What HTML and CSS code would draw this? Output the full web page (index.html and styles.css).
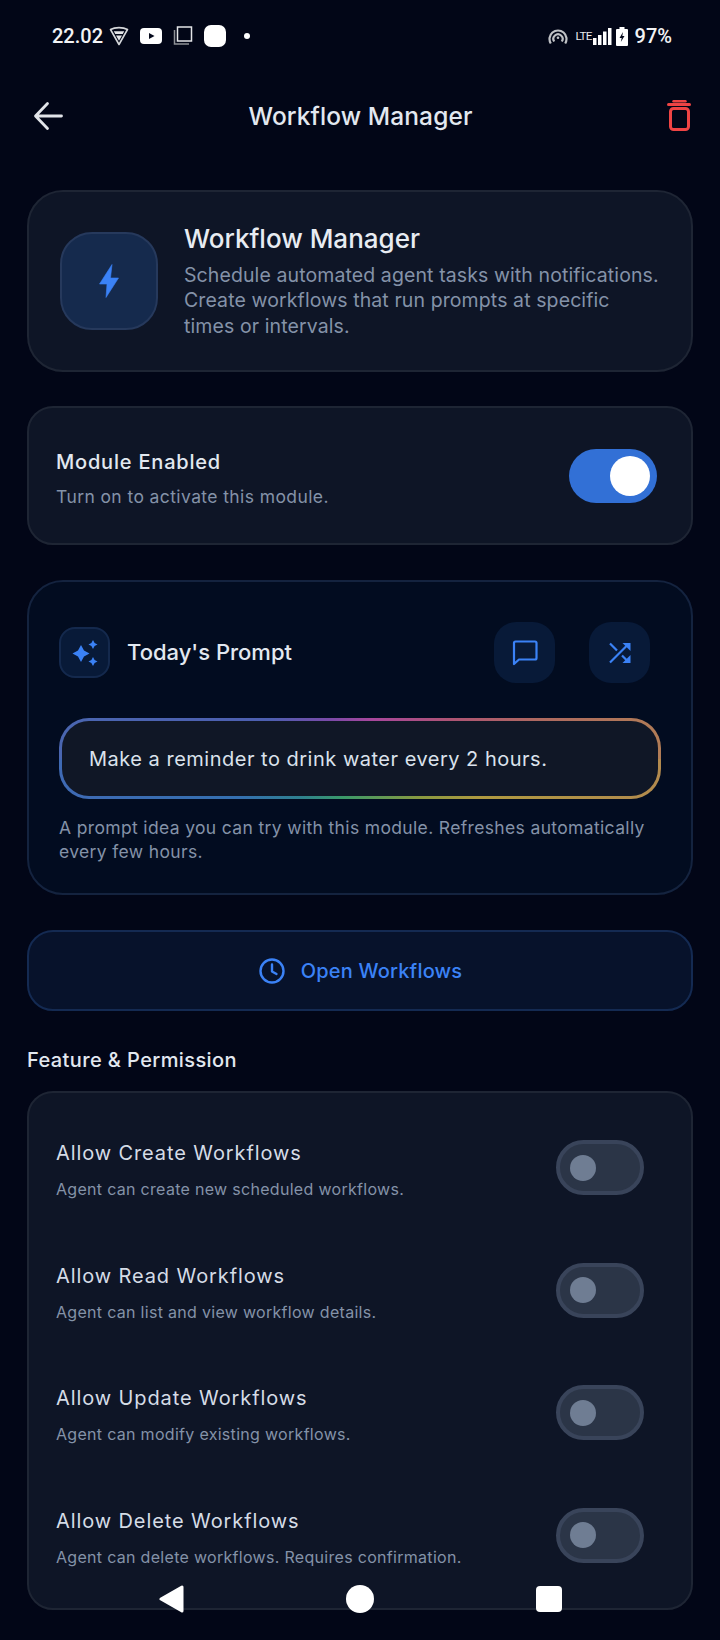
FILE: index.html
```html
<!DOCTYPE html>
<html>
<head lang="en">
    <meta charset="UTF-8">
    <title>Workflow Manager</title>
    <link rel="stylesheet" href="styles.css">
</head>
<body>
<div class="status">
    <div class="status-left">
        <span class="clock">22.02</span>
        <svg class="s-vpn" width="20" height="20" viewBox="0 0 20 20"><path d="M1.500 3.500 C6 1 14 1 18.500 3.500 L10 18.500 Z" fill="none" stroke="#d5d7db" stroke-width="1.600" stroke-linejoin="round"/><path d="M4.800 5.300 H15.200 L13.800 8 H6.300 Z M7 9.500 H13 L10 14.800 Z" fill="#e4e5e8"/></svg>
        <svg class="s-yt" width="22" height="16" viewBox="0 0 22 16"><rect width="22" height="16" rx="4" fill="#fff"/><path d="M9 5 L14.500 8 L9 11 Z" fill="#050a1c"/></svg>
        <svg class="s-copy" width="20" height="20" viewBox="0 0 20 20" fill="none"><rect x="4.500" y="1" width="14" height="14" stroke="#e4e5e8" stroke-width="1.500"/><path d="M1.500 4 V18 H16" stroke="#8e9196" stroke-width="1.500"/></svg>
        <span class="s-square"></span>
        <span class="s-dot"></span>
    </div>
    <div class="status-right">
        <svg width="20" height="18" viewBox="0 0 20 18" fill="none" stroke="#bfc1c5" stroke-width="2.200"><path d="M2.800 16.500 A8.500 8.500 0 1 1 17.200 16.500"/><path d="M6.200 14.500 A4.600 4.600 0 1 1 13.800 14.500"/><circle cx="10" cy="10.800" r="1.300" fill="#bfc1c5" stroke="none"/></svg>
        <span class="lte">LTE</span>
        <svg class="s-bars" width="19" height="17" viewBox="0 0 19 17" fill="#fff"><rect x="0" y="10" width="3.500" height="7"/><rect x="5" y="7" width="3.500" height="10"/><rect x="10" y="3.500" width="3.500" height="13.500"/><rect x="15" y="0" width="3.500" height="17"/></svg>
        <svg class="s-batt" width="12" height="19" viewBox="0 0 12 19"><path d="M3.500 0 H8.500 V2 H11 A1 1 0 0 1 12 3 V18 A1 1 0 0 1 11 19 H1 A1 1 0 0 1 0 18 V3 A1 1 0 0 1 1 2 H3.500 Z" fill="#fff"/><path d="M7 5 L3.500 11 H5.700 L4.800 15 L8.500 9 H6.300 Z" fill="#050a1c"/></svg>
        <span class="clock pct">97%</span>
    </div>
</div>

<div class="topbar">
    <svg class="back" width="32" height="30" viewBox="0 0 32 30" fill="none" stroke="#e2e4e9" stroke-width="2.800" stroke-linecap="round" stroke-linejoin="round"><path d="M28.500 15 H3 M14.500 2.500 L2.500 15 L14.500 27.500"/></svg>
    <h1>Workflow Manager</h1>
    <svg class="trash" width="26" height="32" viewBox="0 0 26 32" fill="none" stroke="#ef4444" stroke-width="3" stroke-linejoin="round" stroke-linecap="round"><path d="M3.500 4.500 H24.500"/><path d="M8.500 1.300 H20.500" stroke-width="2.400"/><rect x="5.500" y="8.500" width="18" height="21" rx="3"/></svg>
</div>

<div class="card info-card">
    <div class="info-icon">
        <svg width="20" height="34" viewBox="0 0 20 34"><path d="M13 0.500 L0.500 20 H8 L7 33.500 L19.500 14 H11.500 Z" fill="#3b82f6" stroke="#3b82f6" stroke-width="0.600" stroke-linejoin="round"/></svg>
    </div>
    <div class="info-text">
        <h2>Workflow Manager</h2>
        <p>Schedule automated agent tasks with notifications.<br>Create workflows that run prompts at specific<br>times or intervals.</p>
    </div>
</div>

<div class="card enable-card">
    <div>
        <div class="enable-title">Module Enabled</div>
        <div class="enable-sub">Turn on to activate this module.</div>
    </div>
    <div class="switch on"><span></span></div>
</div>

<div class="card prompt-card">
    <div class="prompt-head">
        <div class="spark-box">
            <svg width="28" height="28" viewBox="0 0 28 28" fill="#3b82f6"><path d="M10 6 L13 11.500 L18.500 14.500 L13 17.500 L10 23 L7 17.500 L1.500 14.500 L7 11.500 Z"/><path d="M22 1 L23.600 3.900 L26.500 5.500 L23.600 7.100 L22 10 L20.400 7.100 L17.500 5.500 L20.400 3.900 Z"/><path d="M22 18 L23.600 20.900 L26.500 22.500 L23.600 24.100 L22 27 L20.400 24.100 L17.500 22.500 L20.400 20.900 Z"/></svg>
        </div>
        <div class="prompt-title">Today's Prompt</div>
        <div class="round-btn">
            <svg width="26" height="26" viewBox="0 0 26 26" fill="none" stroke="#3b82f6" stroke-width="2.200" stroke-linejoin="round"><path d="M2 3 Q2 1.500 3.500 1.500 H23 Q24.500 1.500 24.500 3 V18 Q24.500 19.500 23 19.500 H7 L2 24 Z"/></svg>
        </div>
        <div class="round-btn">
            <svg width="24" height="24" viewBox="0 0 24 24"><path d="M2 21.500 L20 3.500 M2 2.500 L9 9.500 M14 14.500 L20 20.500" fill="none" stroke="#3b82f6" stroke-width="2.200"/><path d="M14.500 2 H22.500 V10 Z M14.500 22 H22.500 V14 Z" fill="#3b82f6"/></svg>
        </div>
    </div>
    <div class="prompt-box">Make a reminder to drink water every 2 hours.</div>
    <p class="prompt-note">A prompt idea you can try with this module. Refreshes automatically every few hours.</p>
</div>

<div class="card open-btn">
    <svg width="28" height="28" viewBox="0 0 28 28" fill="none" stroke="#3b82f6" stroke-width="2.400" stroke-linecap="round" stroke-linejoin="round"><circle cx="14" cy="14" r="11.500"/><path d="M14 7.500 V14.500 L18.500 17"/></svg>
    <span>Open Workflows</span>
</div>

<div class="section-label">Feature &amp; Permission</div>

<div class="card perm-card">
    <div class="perm-row">
        <div>
            <div class="perm-title">Allow Create Workflows</div>
            <div class="perm-sub">Agent can create new scheduled workflows.</div>
        </div>
        <div class="switch"><span></span></div>
    </div>
    <div class="perm-row">
        <div>
            <div class="perm-title">Allow Read Workflows</div>
            <div class="perm-sub">Agent can list and view workflow details.</div>
        </div>
        <div class="switch"><span></span></div>
    </div>
    <div class="perm-row">
        <div>
            <div class="perm-title">Allow Update Workflows</div>
            <div class="perm-sub">Agent can modify existing workflows.</div>
        </div>
        <div class="switch"><span></span></div>
    </div>
    <div class="perm-row">
        <div>
            <div class="perm-title">Allow Delete Workflows</div>
            <div class="perm-sub">Agent can delete workflows. Requires confirmation.</div>
        </div>
        <div class="switch"><span></span></div>
    </div>
</div>

<div class="navbar">
    <svg width="26" height="28" viewBox="0 0 26 28"><path d="M24 2 V26 L3 14 Z" fill="#fff" stroke="#fff" stroke-width="3" stroke-linejoin="round"/></svg>
    <span class="nav-home"></span>
    <span class="nav-recent"></span>
</div>
</body>
</html>
```

FILE: styles.css
```css
* {
    padding: 0;
    margin: 0;
    box-sizing: border-box;
}

html, body {
    width: 720px;
    height: 1640px;
    overflow: hidden;
}

body {
    position: relative;
    background-color: #020617;
    font-family: Inter, "Noto Sans", sans-serif;
    color: #e2e8f0;
    padding: 0 27px;
}

.status {
    height: 72px;
    margin: 0 -27px;
    padding: 0 48px 0 52px;
    display: flex;
    justify-content: space-between;
    align-items: center;
    color: #fff;
}

.status-left, .status-right {
    display: flex;
    align-items: center;
}

.clock {
    font-family: Roboto, sans-serif;
    font-size: 20px;
    font-weight: 500;
    color: #f2f3f5;
}

.s-vpn { margin-left: 6px; }
.s-yt { margin-left: 11px; }
.s-copy { margin-left: 11px; }

.s-square {
    width: 22px;
    height: 22px;
    margin-left: 11px;
    border-radius: 7px;
    background-color: #fff;
}

.s-dot {
    width: 6px;
    height: 6px;
    margin-left: 18px;
    border-radius: 50%;
    background-color: #fff;
}

.lte {
    font-family: Roboto, sans-serif;
    font-size: 11.700px;
    letter-spacing: -0.800px;
    margin-left: 8px;
    color: #e8e9eb;
}

.s-bars { margin-left: 1px; }
.s-batt { margin-left: 4px; }
.pct { margin-left: 7px; }

.topbar {
    height: 88px;
    display: grid;
    grid-template-columns: 1fr auto 1fr;
    align-items: center;
    padding: 0 5px 0 6px;
    margin-bottom: 30px;
}

.topbar h1 {
    font-size: 24.500px;
    font-weight: 500;
    letter-spacing: 0.100px;
    color: #e2e8f0;
}

.trash {
    justify-self: end;
    margin-right: -3px;
}

.card {
    border: 2px solid #1e2534;
    background-color: #0e1526;
}

.info-card {
    height: 182px;
    border-radius: 36px;
    padding: 0 8px 0 31px;
    display: flex;
    align-items: center;
}

.info-icon {
    width: 98px;
    height: 98px;
    flex: none;
    border: 2px solid #26395c;
    border-radius: 32px;
    background-color: #152a4d;
    display: flex;
    align-items: center;
    justify-content: center;
}

.info-text {
    margin-left: 26px;
}

.info-text h2 {
    font-size: 26px;
    font-weight: 500;
    color: #e8ecf2;
    margin-bottom: 9px;
}

.info-text p {
    font-size: 19.500px;
    line-height: 25.500px;
    letter-spacing: 0.100px;
    color: #8492a8;
}

.enable-card {
    height: 139px;
    margin-top: 34px;
    border-radius: 26px;
    padding: 6px 34px 0 27px;
    display: flex;
    align-items: center;
    justify-content: space-between;
}

.enable-title {
    font-size: 20px;
    font-weight: 500;
    letter-spacing: 0.800px;
    color: #e2e8f0;
}

.enable-sub {
    margin-top: 12px;
    font-size: 17.500px;
    letter-spacing: 0.400px;
    color: #8492a8;
}

.enable-card .switch {
    margin-top: -6px;
}

.switch {
    width: 88px;
    height: 55px;
    flex: none;
    border: 4px solid #39445a;
    border-radius: 28px;
    background-color: #2b3547;
    display: flex;
    align-items: center;
    padding-left: 10px;
}

.switch span {
    width: 26px;
    height: 26px;
    border-radius: 50%;
    background-color: #6f7d93;
}

.switch.on {
    height: 54px;
    border: 0;
    background-color: #3270d6;
    padding-left: 41px;
}

.switch.on span {
    width: 40px;
    height: 40px;
    background-color: #fff;
}

.prompt-card {
    height: 315px;
    margin-top: 35px;
    border-color: #14233f;
    border-radius: 36px;
    background-color: #020c20;
    padding: 40px 30px 0;
}

.prompt-head {
    display: flex;
    align-items: center;
    height: 61px;
    padding-right: 11px;
}

.spark-box {
    width: 51px;
    height: 51px;
    flex: none;
    border: 2px solid #14294d;
    border-radius: 16px;
    background-color: #081a38;
    display: flex;
    align-items: center;
    justify-content: center;
}

.prompt-title {
    flex: 1;
    margin-left: 17px;
    padding-bottom: 2px;
    font-size: 22px;
    font-weight: 500;
    color: #e2e8f0;
}

.round-btn {
    width: 61px;
    height: 61px;
    flex: none;
    margin-left: 34px;
    border-radius: 22px;
    background-color: #081a38;
    display: flex;
    align-items: center;
    justify-content: center;
}

.prompt-box {
    height: 81px;
    margin-top: 35px;
    border: 3px solid transparent;
    border-radius: 30px;
    background:
        linear-gradient(#101726, #101726) padding-box,
        linear-gradient(90deg, #4a66b0 0%, #4d5fb0 35%, #7a4aa8 45%, #a8479c 52%, #ad5474 65%, #ae6a60 80%, #b17c56 100%) top / 100% 51% no-repeat border-box,
        linear-gradient(90deg, #3f6ab4 0%, #3570b0 30%, #2f8190 40%, #3a9a6a 47%, #8a9a40 60%, #b09a40 70%, #b28a4e 100%) bottom / 100% 51% no-repeat border-box;
    padding: 0 27px;
    display: flex;
    align-items: center;
    font-size: 20px;
    letter-spacing: 0.500px;
    color: #dbe2ec;
}

.prompt-note {
    margin-top: 17px;
    font-size: 17.500px;
    line-height: 24px;
    letter-spacing: 0.350px;
    color: #8492a8;
}

.open-btn {
    height: 81px;
    margin-top: 35px;
    border-color: #142a52;
    border-radius: 26px;
    background-color: #07122b;
    display: flex;
    align-items: center;
    justify-content: center;
    color: #3b82f6;
    font-size: 20px;
    font-weight: 500;
    letter-spacing: 0.200px;
}

.open-btn span {
    margin-left: 15px;
}

.section-label {
    margin-top: 37px;
    font-size: 20px;
    font-weight: 500;
    line-height: 24px;
    letter-spacing: 0.400px;
    color: #e2e8f0;
}

.perm-card {
    height: 519px;
    margin-top: 19px;
    border-radius: 26px;
    padding: 36px 47px 0 27px;
}

.perm-row {
    height: 122.500px;
    display: flex;
    justify-content: space-between;
    align-items: flex-start;
    padding-top: 12px;
}

.perm-row .switch {
    margin-top: -1px;
}

.perm-title {
    font-size: 20px;
    letter-spacing: 0.900px;
    color: #d5dce6;
    line-height: 24px;
}

.perm-sub {
    margin-top: 14px;
    font-size: 16px;
    letter-spacing: 0.300px;
    line-height: 20px;
    color: #8492a8;
}

.navbar {
    position: absolute;
    left: 0;
    right: 0;
    bottom: 21px;
    height: 40px;
    display: flex;
    align-items: center;
    padding-left: 158px;
}

.nav-home {
    width: 28px;
    height: 28px;
    margin-left: 162px;
    border-radius: 50%;
    background-color: #fff;
}

.nav-recent {
    width: 26px;
    height: 26px;
    margin-left: 162px;
    border-radius: 4px;
    background-color: #fff;
}
```
